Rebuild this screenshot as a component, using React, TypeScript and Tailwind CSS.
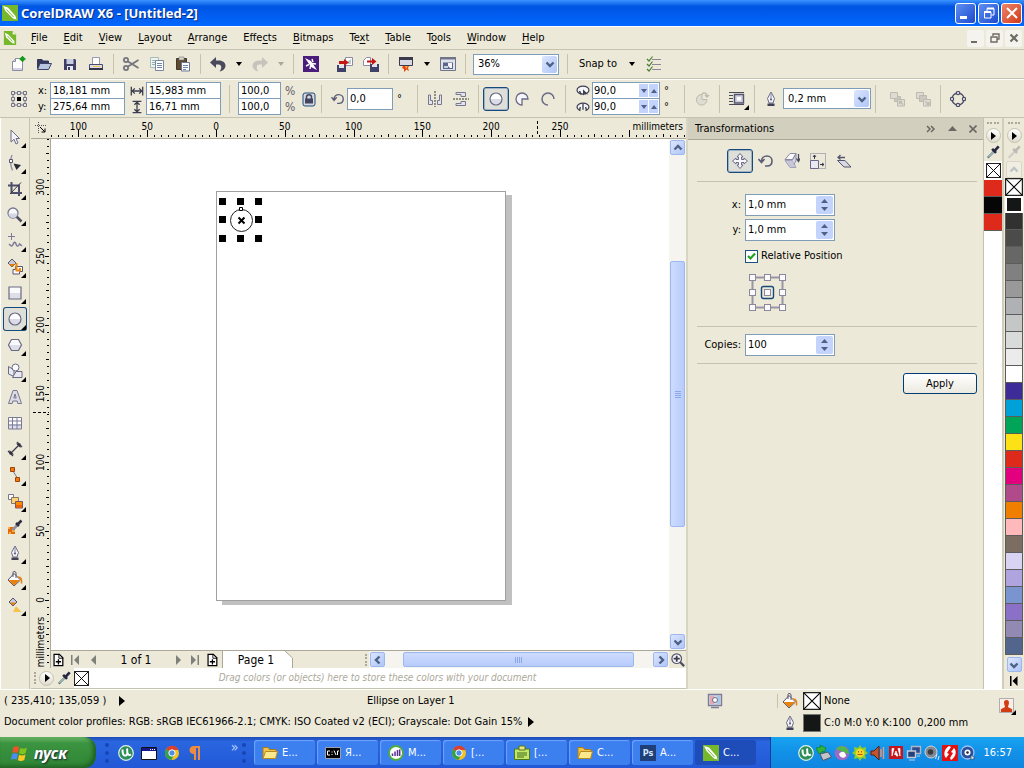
import { useState } from "react"
import type { ReactNode } from "react"
import clsx from "clsx"

const INK = "#4d4d6b"
const PALE = "#e4e4ee"
const GREY = "#bdbab2"

const icons: Record<string, ReactNode> = {
  newDoc: (
    <>
      <path d="M5.5 2.5H12.5V14.5H2.5V5.5Z" fill="#fff" stroke="#8c8ca8" />
      <path d="M5.5 2.5V5.5H2.5" fill="#d8d8e6" stroke="#8c8ca8" />
      <path d="M3 12h9v2H3z" fill="#d4d4e2" />
      <circle cx="12.5" cy="3" r="2.3" fill="#159a1e" />
      <path d="M12.5 0V6M9.5 3H15.500" stroke="#159a1e" strokeWidth="1.400" />
    </>
  ),
  open: (
    <>
      <path d="M1.500 12.500V3.500H6L7 5H12.500V7" fill="#33385c" stroke="#33385c" />
      <path d="M4 7.500H15.500L12.500 13.500H1.500Z" fill="#b9c6de" stroke="#3b4468" />
    </>
  ),
  save: (
    <>
      <path d="M2 3H13L14 4V14H2Z" fill="#3f3f66" />
      <path d="M4.500 3H11.500V8H4.500Z" fill="#c9cbe0" />
      <path d="M5 10H11V14H5Z" fill="#e9e9f3" />
      <path d="M6 11H8V14H6Z" fill="#3f3f66" />
    </>
  ),
  print: (
    <>
      <path d="M4.500 1.500H11.500V9H4.500Z" fill="#fff" stroke="#9a9ab0" />
      <path d="M1.500 8.500H14.500V13.500H1.500Z" fill="#dcdce8" stroke={INK} />
      <path d="M1 12H15V14H1Z" fill="#34344e" />
      <path d="M5 10H12V11H5Z" fill="#efc54d" />
    </>
  ),
  cut: (
    <g fill="none" stroke="#74747c" strokeWidth="1.800">
      <circle cx="3" cy="4" r="2.100" />
      <circle cx="3" cy="12" r="2.100" />
      <path d="M5 5.500L15.500 12M5 10.500L15.500 4" />
    </g>
  ),
  copy: (
    <>
      <path d="M1.500 1.500H9.500V11.500H1.500Z" fill="#eef3f0" stroke="#a9bcb8" />
      <path d="M3 4.500H8M3 6.500H8M3 8.500H8" stroke="#8fb3ae" />
      <path d="M6.500 4.500H14.500V14.500H6.500Z" fill="#fff" stroke="#7d86a0" />
      <path d="M8 7.500H13M8 9.500H13M8 11.500H13" stroke="#6f87a8" />
    </>
  ),
  paste: (
    <>
      <path d="M1.500 2.500H11.500V13.500H1.500Z" fill="#5e4a34" stroke="#453625" />
      <path d="M4 1H9V4H4Z" fill="#d8d8d0" stroke="#777" strokeWidth=".6" />
      <path d="M6.500 6.500H14.500V15H6.500Z" fill="#fff" stroke="#6d7694" />
      <path d="M8 9.500H13M8 11.500H13M8 13.500H11" stroke="#6f87a8" />
    </>
  ),
  undo: (
    <path d="M0 6.500L6 1V4.500H9C13 4.500 15.500 7 15.500 9.500C15.500 12.500 13 15 9.500 15.500C12 13 12 8.500 8.500 8.500H6V12Z" fill="#4a4a5e" />
  ),
  redo: (
    <path d="M16 6.500L10 1V4.500H7C3 4.500 .500 7 .500 9.500C.500 12.500 3 15 6.500 15.500C4 13 4 8.500 7.500 8.500H10V12Z" fill="#c6c4bc" />
  ),
  search: (
    <>
      <path d="M0 0H16V16H0Z" fill="#4a1d7c" />
      <path d="M2 2L8 5L10 8L14 14L8 11L6 8Z" fill="#fff" />
      <path d="M9 3L10 6M13 8L9 7.500M3 10L6 8.500M7 13L7.500 10" stroke="#fff" strokeWidth="1.400" />
    </>
  ),
  importFile: (
    <>
      <path d="M8.500 6V1.500H15.500V9.500H9" fill="#fff" stroke="#8c8ca8" />
      <path d="M11 5L14 3V8H11Z" fill="#b7cdd0" />
      <path d="M0 9H9V16H0Z" fill="#3f4268" />
      <path d="M2 9H7V12H2Z" fill="#e2e2ee" />
      <path d="M2 5H7V3L12 6.500L7 10V8H2Z" fill="#c51616" />
    </>
  ),
  exportFile: (
    <>
      <path d="M3.500 1.500H7.500V9.500H.500V4.500Z" fill="#fff" stroke="#8c8ca8" />
      <path d="M7 8H16V16H7Z" fill="#3f4268" />
      <path d="M9 8H14V11H9Z" fill="#e2e2ee" />
      <path d="M4 4.500H9V2L13.500 5.500L9 9V6.500H4Z" fill="#c51616" />
    </>
  ),
  launcher: (
    <>
      <path d="M1.500 1.500H14.500V9.500H1.500Z" fill="#d6d9e4" stroke="#3a3a4c" />
      <path d="M1 1H15V4H1Z" fill="#3a3a4c" />
      <path d="M5 10H11L10 12L11 15L8.500 13.500L6 16L6 13L4 12Z" fill="#e8420f" />
      <path d="M7 10H9.500L8.500 13Z" fill="#ffb93b" />
    </>
  ),
  welcome: (
    <>
      <path d="M.500 1.500H15.500V14.500H.500Z" fill="#dfe3ee" stroke="#707488" />
      <path d="M0 1H16V3.500H0Z" fill="#707488" />
      <path d="M3 6.500H13V13H3Z" fill="#5d6488" />
      <path d="M8 7H12V12H10L8 10Z" fill="#f4f6fb" />
      <path d="M4 10H8V12H4Z" fill="#c1d5e0" />
    </>
  ),
  options: (
    <>
      <path d="M6 3.500H15M6 8.500H15M6 13.500H15" stroke="#8a8a96" strokeWidth="1.200" />
      <path d="M1 3L3 5L6.500 .500M1 8L3 10L6.500 5.500M1 13L3 15L6.500 10.500" fill="none" stroke="#4b7d33" strokeWidth="1.200" />
    </>
  ),
  position: (
    <>
      <path d="M2 2H14V14H2Z" fill="none" stroke="#72728a" />
      {[0.5, 6.5, 12.5].map((y) =>
        [0.5, 6.5, 12.5].map((x) => <path key={`${x}-${y}`} d={`M${x} ${y}h3v3h-3z`} fill="#ece9d8" stroke="#72728a" />),
      )}
      <path d="M4 4H12V12H4Z" fill="#ece9d8" />
      <path d="M6 6H10V10H6Z" fill="#000" />
    </>
  ),
  widthArrow: (
    <path d="M1.500 3V13M14.500 3V13M2 8H14M5.500 5L2.500 8L5.500 11M10.500 5L13.500 8L10.500 11" fill="none" stroke="#3e3e50" strokeWidth="1.500" />
  ),
  heightArrow: (
    <path d="M3 1.500H13M3 14.500H13M8 2V14M5 5.500L8 2.500L11 5.500M5 10.500L8 13.500L11 10.500" fill="none" stroke="#3e3e50" strokeWidth="1.500" />
  ),
  lock: (
    <>
      <rect x="2" y="2" width="12" height="13" rx="2" fill="#d5d8e2" stroke="#1f4e79" />
      <path d="M5.500 8V6C5.500 3 10.500 3 10.500 6V8" fill="none" stroke="#44445e" strokeWidth="1.500" />
      <path d="M4 7.500H12V12.500H4Z" fill="#44445e" />
    </>
  ),
  rotate: (
    <path d="M3.500 8C3.500 5 6 3 9 3C12 3 14 5.300 14 8C14 11 12 13 9 13H7M.500 6L3.500 9.500L6.500 6" fill="none" stroke="#5c5c78" strokeWidth="1.600" />
  ),
  mirrorH: (
    <>
      <path d="M1.500 4V13.500H5.500V9.500H3.500V4ZM14.500 4V13.500H10.500V9.500H12.500V4Z" fill={PALE} stroke="#77778f" />
      <path d="M8 0V16" stroke="#333" strokeDasharray="2 1" />
    </>
  ),
  mirrorV: (
    <>
      <path d="M3 1.500H12.500V5.500H8V3.500H3ZM3 14.500H12.500V10.500H8V12.500H3Z" fill={PALE} stroke="#77778f" />
      <path d="M0 8H16" stroke="#333" strokeDasharray="2 1" />
    </>
  ),
  ellipse: (
    <>
      <circle cx="8" cy="8" r="6" fill="#fff" />
      <path d="M2 8H14A6 6 0 0 1 2 8Z" fill="#dcdce8" />
      <circle cx="8" cy="8" r="6" fill="none" stroke="#6a6a86" strokeWidth="1.200" />
    </>
  ),
  pie: <path d="M8 8H14A6 6 0 1 0 8 14Z" fill="#f5f5fa" stroke="#6a6a86" strokeWidth="1.300" />,
  arc: <path d="M14 8A6 6 0 1 0 8 14" fill="none" stroke="#6a6a86" strokeWidth="1.500" />,
  angleA: (
    <>
      <ellipse cx="8" cy="7" rx="6.800" ry="4.500" fill="#f5f5fa" stroke="#3e3e50" strokeWidth="1.400" />
      <path d="M8 6V13L10 11L14 12Z" fill="#3e3e50" />
      <path d="M4 8L6 12" stroke="#3e3e50" strokeWidth="1.800" />
    </>
  ),
  angleB: (
    <>
      <ellipse cx="8" cy="8" rx="6.800" ry="4.500" fill="#f5f5fa" stroke="#3e3e50" strokeWidth="1.400" />
      <path d="M5 10H11V14H5Z" fill="#ece9d8" />
      <path d="M8 4V11M5 8L4 12M11 8L12 12" stroke="#3e3e50" strokeWidth="1.500" />
    </>
  ),
  direction: (
    <g fill="#dedbd0" stroke={GREY}>
      <path d="M8 8.500H13A5.300 5.300 0 1 1 8 3.500Z" />
      <path d="M8 3C10 1 13 2 13 5M11 4L13 6L15 4" fill="none" strokeWidth="1.400" />
    </g>
  ),
  wrap: (
    <>
      <path d="M0 1.500H15M0 4.500H4M0 7.500H4M0 10.500H4M0 13.500H15" stroke="#4a4a58" />
      <path d="M5.500 3.500H14.500V12H5.500Z" fill="#d0d0e2" stroke="#55556e" strokeWidth="1.400" />
      <path d="M8 6H12V9.500H8Z" fill="#fff" />
    </>
  ),
  pen: (
    <>
      <path d="M8 1L11.500 7.500L10 12H6L4.500 7.500Z" fill="#f2f2f8" stroke="#6a6a86" />
      <path d="M8 2V8" stroke="#8a8aa2" />
      <circle cx="8" cy="8.500" r="1" fill="#55556e" />
      <path d="M4.500 12.500H11.500V15H4.500Z" fill="#3f3f55" />
    </>
  ),
  toFront: (
    <g fill="#dedbd0" stroke={GREY}>
      <path d="M5.500 5.500H11.500V10.500H5.500Z" fill="#cbc8bf" />
      <path d="M8.500 8.500H15.500V15H8.500Z" />
      <path d="M1.500 1.500H8.500V7.500H1.500Z" />
      <path d="M14 13.500L10.500 10.500M10.500 13V10.500H13" fill="none" strokeWidth="1.300" />
    </g>
  ),
  toBack: (
    <g fill="#dedbd0" stroke={GREY}>
      <path d="M1.500 1.500H8.500V7.500H1.500Z" />
      <path d="M4.500 4.500H11.500V10.500H4.500Z" fill="#cbc8bf" />
      <path d="M8.500 8.500H15.500V15H8.500Z" />
      <path d="M10.500 10.500L14 13.500M14 11V13.500H11.500" fill="none" strokeWidth="1.300" />
    </g>
  ),
  curves: (
    <g fill="#fff" stroke="#4d4d66" strokeWidth="1.300">
      <circle cx="8" cy="8" r="6" fill="none" />
      <circle cx="8" cy="2" r="1.600" />
      <circle cx="8" cy="14" r="1.600" />
      <circle cx="2" cy="8" r="1.600" />
      <circle cx="14" cy="8" r="1.600" />
    </g>
  ),
  pick: <path d="M4 1V13L7 10.300L9 15L11 14L9 9.500H12.500Z" fill="#f2f2f8" stroke="#6d6d88" />,
  shape: (
    <>
      <path d="M5 0C3 5 3 10 5.500 15.500" fill="none" stroke="#8a8aa2" strokeWidth="1.300" />
      <path d="M2.500 4.500H5.500V7.500H2.500Z" fill="#fff" stroke="#55556e" />
      <path d="M6.500 8.500L14 10L9.500 15Z" fill="#2b2b38" />
    </>
  ),
  crop: (
    <>
      <path d="M4.500 1V12H15M1 4.500H12V15" fill="none" stroke="#4e4e6c" strokeWidth="2" />
      <path d="M3 13L14 1.500" stroke="#3a3a48" />
    </>
  ),
  zoom: (
    <>
      <path d="M9 9L14.500 14.500" stroke="#4d4d5e" strokeWidth="2.500" />
      <circle cx="6" cy="6" r="5" fill="#f8f8fc" stroke="#77778f" strokeWidth="1.300" />
      <path d="M1.500 6.500H10.500A4.500 4.500 0 0 1 1.500 6.500Z" fill="#d3d7e4" />
    </>
  ),
  navigator: (
    <>
      <path d="M10 10L15 15" stroke="#4d4d5e" strokeWidth="2.500" />
      <circle cx="6.500" cy="6.500" r="5.500" fill="#f8f8fc" stroke="#55556e" strokeWidth="1.400" />
      <path d="M6.500 3V10M3 6.500H10" stroke="#3a3a4c" strokeWidth="2" />
    </>
  ),
  freehand: (
    <g fill="none" stroke="#7b7b97">
      <path d="M4.500 0V7M1 3.500H8" />
      <path d="M2 11C4 13 5 14 6 11.500S8 8 9 11S11 14 12.500 11L15 13" strokeWidth="1.500" />
    </g>
  ),
  smartFill: (
    <>
      <path d="M8.500 7.500H15.500V12.500H12.500V15H6V10.500H8.500Z" fill="#fff" stroke="#55556e" />
      <path d="M5 0L9 4L5 8L1 4Z" fill="#c9c9da" stroke="#55556e" />
      <path d="M2 5H8L5 8Z" fill="#e87d0a" />
      <path d="M9.500 4V11.500H13V9" fill="none" stroke="#f0860c" strokeWidth="2" />
    </>
  ),
  rectangle: (
    <>
      <path d="M2 2H14V14H2Z" fill="#fafafc" />
      <path d="M2 8H14V14H2Z" fill="#dedee9" />
      <path d="M2 2H14V14H2Z" fill="none" stroke="#6a6a86" strokeWidth="1.200" />
    </>
  ),
  polygon: (
    <>
      <path d="M4.500 2.500H11.500L14.500 8L11.500 13.500H4.500L1.500 8Z" fill="#fafafc" />
      <path d="M1.500 8H14.500L11.500 13.500H4.500Z" fill="#dedee9" />
      <path d="M4.500 2.500H11.500L14.500 8L11.500 13.500H4.500L1.500 8Z" fill="none" stroke="#6a6a86" strokeWidth="1.200" />
    </>
  ),
  basicShapes: (
    <g fill="#e9e9f2" stroke="#6a6a86">
      <path d="M1.500 3.500L7 7V13.500L1.500 11Z" />
      <path d="M9 8.500H15V14.500H5.500Z" />
      <circle cx="8.500" cy="4.500" r="3.500" fill="#fafafc" />
    </g>
  ),
  text: (
    <path d="M6 1.500H10L14.500 14.500H10.800L10.200 12H5.800L5.200 14.500H1.500ZM6.800 9H9.200L8 5Z" fill="#dcdce8" stroke="#77778f" fillRule="evenodd" />
  ),
  table: (
    <>
      <path d="M1.500 2.500H14.500V14H1.500Z" fill="#fff" />
      <path d="M2 9H14V14H2Z" fill="#dedee9" />
      <path d="M1.500 2.500H14.500V14H1.500ZM1.500 6H14.500M1.500 10H14.500M5.500 2.500V14M10 2.500V14" fill="none" stroke="#7b7b97" />
    </>
  ),
  dimension: (
    <>
      <path d="M3 13L13 3M1 10L6 15M10 1L15 6" stroke="#3a3a4c" strokeWidth="1.300" />
      <path d="M2.500 13.500V9L7 13.500ZM13.500 2.500V7L9 2.500Z" fill="#2f2f40" />
    </>
  ),
  connector: (
    <>
      <path d="M6 4L11 12" stroke="#77778f" />
      <path d="M3.500 .500H7.500V4.500H3.500ZM8.500 10.500H12.500V14.500H8.500Z" fill="#f27a08" stroke="#a0420a" />
    </>
  ),
  blend: (
    <>
      <path d="M1.500 1.500H6.500V6.500H1.500Z" fill="#fff" stroke="#77778f" />
      <path d="M4.500 4.500H11.500V10.500H4.500Z" fill="#fbd27a" stroke="#8a7560" />
      <path d="M8.500 8.500H15.500V15H8.500Z" fill="#ff8a00" stroke="#77566a" />
      <path d="M9 12H15V14.500H9Z" fill="#f25c05" />
    </>
  ),
  colorPick: (
    <>
      <path d="M1 8H8V15H1Z" fill="#e06a0a" />
      <path d="M1 8H3V10H1ZM5 11H8V13H5ZM2 13H4V15H2Z" fill="#fbb040" />
      <path d="M5.500 11L11 5.500" stroke="#8f8fa6" strokeWidth="2.500" />
      <path d="M9 4L12 7M10.500 5.500L14.500 1.500" stroke="#2d2d40" strokeWidth="2.500" />
    </>
  ),
  dropper: (
    <>
      <path d="M2 14.500L9 7.500" stroke="#5c7f82" strokeWidth="2.600" />
      <path d="M3 13.500L8.500 8" stroke="#e9f4f4" />
      <path d="M7 4.500L11.500 9M9.500 7L14.500 1.500" stroke="#262640" strokeWidth="3" />
    </>
  ),
  dropperOff: (
    <>
      <path d="M2 14.500L9 7.500" stroke="#cfcdc6" strokeWidth="2.600" />
      <path d="M7 4.500L11.500 9M9.500 7L14.500 1.500" stroke="#bcbab5" strokeWidth="3" />
    </>
  ),
  fill: (
    <>
      <path d="M7 2.500L13.500 9L7 15L1 9Z" fill="#fff" stroke="#55556e" />
      <path d="M1.500 9H13L7 14.500Z" fill="#e8820c" />
      <path d="M6 6V1.500C6 0 9 0 9 2V7" fill="none" stroke="#55556e" />
      <path d="M11 6C14 6 15 8 14.500 12.500" fill="none" stroke="#e8820c" strokeWidth="1.600" />
    </>
  ),
  interactiveFill: (
    <>
      <path d="M9 9L14.500 15H6Z" fill="#f5c24d" />
      <path d="M6 1L10 5L6 9L2 5Z" fill="#c9c9da" stroke="#55556e" />
      <path d="M3 5.500H9L6 8.500Z" fill="#e8820c" />
    </>
  ),
  move: (
    <path d="M8 .500L11 4H9.500V6.500H12V5L15.500 8L12 11V9.500H9.500V12H11L8 15.500L5 12H6.500V9.500H4V11L.500 8L4 5V6.500H6.500V4H5Z" fill="#f7f7fb" stroke="#6a6a86" />
  ),
  mirror: (
    <>
      <path d="M6 .500H12L8.500 6.500H1Z" fill="#fafafc" stroke="#8a8aa2" />
      <path d="M1 7.500H8.500L12 14.500H6Z" fill="#c7c7d9" stroke="#a3a3b8" />
      <path d="M8.500 7L12 .500V8L10 11" fill="#d8d8e6" stroke="#8a8aa2" />
      <path d="M14.500 1V8M12.500 5.500L14.500 8.500L16 5.500" fill="none" stroke="#4a4a5e" strokeWidth="1.300" />
    </>
  ),
  size: (
    <>
      <path d="M.500 .500H15.500V15.500H.500Z" fill="none" stroke="#77778f" strokeDasharray="1 1" />
      <path d="M.500 7.500H8.500V15.500H.500Z" fill="#e9e9f2" stroke="#6a6a86" />
      <path d="M4.500 6V2M3 4L4.500 2L6 4M10 11.500H14M12 10L14 11.500L12 13" fill="none" stroke="#3a3a4c" />
    </>
  ),
  skew: (
    <>
      <path d="M1.500 7.500H9L15 14H8Z" fill="#d9d9e6" stroke="#55556e" />
      <path d="M2 4.500H9M4.500 2L2 4.500L4.500 6.500" fill="none" stroke="#55556e" strokeWidth="1.300" />
    </>
  ),
  monitor: (
    <>
      <path d="M1.500 1.500H14.500V12.500H1.500Z" fill="#d5d8e4" stroke="#7d7d9a" strokeWidth="1.400" />
      <path d="M3 3H7V11H3Z" fill="#e4a9b2" />
      <path d="M10 3H13V11H10Z" fill="#a9c8e8" />
      <circle cx="8" cy="7" r="2.500" fill="#fff" stroke="#6a6a86" />
      <path d="M4 14.500H12" stroke="#7d7d9a" strokeWidth="1.500" />
    </>
  ),
  user: (
    <>
      <path d="M.500 .500H15.500V15.500H.500Z" fill="#fbeee9" stroke="#a6a6ae" />
      <path d="M8 2C10.500 2 11 4 10.500 6C10.200 8 9.500 8.500 9.500 9.500L14 12V15H2V12L6.500 9.500C6.500 8.500 5.800 8 5.500 6C5 4 5.500 2 8 2Z" fill="#d23c12" />
    </>
  ),
  corel: (
    <>
      <path d="M0 0H16V16H0Z" fill="#76b82a" />
      <path d="M1 1L6 2.500L13.500 11L14.500 14.500L11 13.500L3.500 6Z" fill="#fff" />
      <path d="M4.500 4.500L11.500 12" stroke="#76b82a" />
    </>
  ),
  corelDoc: (
    <>
      <path d="M1 0H11L15 4V16H1Z" fill="#76b82a" />
      <path d="M11 0V4H15Z" fill="#e6f3d4" />
      <path d="M2 2L6 4L13 11.500V14.500L10 13.500L3.500 7Z" fill="#fff" />
      <path d="M5 5.500L11 12" stroke="#76b82a" />
    </>
  ),
  addPage: (
    <>
      <path d="M3.500 1.500H9.500L13.500 5.500V14.500H3.500Z" fill="#fff" stroke="#000" strokeWidth="1.400" />
      <path d="M9 1V6H14" fill="none" stroke="#000" />
      <path d="M8.500 7V13M5.500 10H11.500" stroke="#000" strokeWidth="1.500" />
    </>
  ),
  flag: (
    <>
      <path d="M3 3C5 1.500 7 2 8 3L7 8C5.500 7 4 7 2 8Z" fill="#f0532a" />
      <path d="M9 3.500C11 4.500 13 4.500 15 3L14 8C12 9.500 10 9.500 8 8.500Z" fill="#7fc31c" />
      <path d="M1.800 9C3.500 8 5.500 8 7 9L6 14C4.500 13 2.500 13 .8 14Z" fill="#4c8df0" />
      <path d="M8 9.500C10 10.500 12 10.500 13.800 9L12.800 14C11 15.500 9 15.500 7 14.500Z" fill="#fcc91f" />
    </>
  ),
  utorrent: (
    <>
      <circle cx="8" cy="8" r="7.300" fill="#2f8f5b" stroke="#dff3e6" strokeWidth="1.200" />
      <path d="M4.500 4.500C4.500 9.500 5.500 11 8 10.500C10 10 9.500 7 9 3.500M9.500 8C10 10 11.500 10.500 13 9.500" fill="none" stroke="#fff" strokeWidth="2" />
    </>
  ),
  window: (
    <>
      <path d="M.500 2.500H15.500V14.500H.500Z" fill="#fff" stroke="#111" />
      <path d="M1 3H15V6H1Z" fill="#16168c" />
      <path d="M9 4.500H10M11 4.500H12M13 4.500H14" stroke="#fff" />
    </>
  ),
  chrome: (
    <>
      <circle cx="8" cy="8" r="7" fill="#f6c21c" />
      <path d="M8 8L2 4.300A7 7 0 0 1 14.500 5H8Z" fill="#d9402f" />
      <path d="M8 8L2 4.300A7 7 0 0 0 7.500 15L10 10Z" fill="#35a04a" />
      <circle cx="8" cy="8" r="3.200" fill="#4d8fe8" stroke="#fff" />
    </>
  ),
  pilcrow: (
    <>
      <path d="M13 1H7C1 1 1 9 7 9V15H9V3H11V15H13Z" fill="#f08a3c" />
      <path d="M3 10L6 15" stroke="#36628f" strokeWidth="2.400" />
    </>
  ),
  folder: (
    <>
      <path d="M1 2.500H6L7.500 4.500H14V13.500H1Z" fill="#f3c244" stroke="#a97c16" />
      <path d="M3.500 6.500H15.500L13.500 13.500H1Z" fill="#fde98d" stroke="#b58a20" />
    </>
  ),
  cmd: (
    <>
      <path d="M.500 2.500H15.500V13.500H.500Z" fill="#000" stroke="#bbb" strokeWidth=".8" />
      <path d="M5 6H2.500V10H5M7 6.500V7.500M7 9V10M9 5.500L11 10M12.500 10V6H14" fill="none" stroke="#fff" />
    </>
  ),
  meter: (
    <>
      <circle cx="8" cy="8" r="7" fill="#fff" stroke="#4fae3c" strokeWidth="1.800" />
      <path d="M4.500 11V8.500M7 11V6.500M9.500 11V5M11.700 11V4.500" stroke="#5b2d91" strokeWidth="1.500" />
    </>
  ),
  notes: (
    <>
      <path d="M.500 4H15.500V14.500H.500Z" fill="#c3e66b" stroke="#4a7a1c" />
      <path d="M5 1H11V5H5Z" fill="#f3e27c" stroke="#4a7a1c" />
      <path d="M3 8H13M3 10H13M3 12H10" stroke="#3f6c16" />
    </>
  ),
  safelyRemove: (
    <>
      <path d="M4 9L12 7L15.500 12L7 15.500Z" fill="#c1c4ca" stroke="#53565e" />
      <path d="M0 3L5 2L4 0L10 3L8 8L7 6L3 9Z" fill="#2fb53a" stroke="#12701b" strokeWidth=".6" />
    </>
  ),
  violetGreen: (
    <>
      <circle cx="8" cy="8" r="7.300" fill="#9a6cc4" />
      <path d="M2 4C6 -1 14 1 15.300 9L9 7Z" fill="#52b848" />
      <path d="M5 9C8 5 12 7 12 11C10 14 6 13 5 9Z" fill="#fff" />
    </>
  ),
  flower: (
    <>
      <path d="M8 0L10 3L14 2L13.500 6L16 8L13 10L14 14L10 13L8 16L6 13L2 14L3 10L0 8L2.500 6L2 2L6 3Z" fill="#8ccf2a" />
      <circle cx="8" cy="8" r="4.300" fill="#f8d52b" />
      <path d="M6.500 6V7.500M9.500 6V7.500M5.500 9.500H10.500" stroke="#b05a00" />
    </>
  ),
  sound: (
    <>
      <path d="M1 6H4L9 1V15L4 10H1Z" fill="#c65330" stroke="#5c1f0c" />
      <path d="M11 4V12M13.500 2V14" stroke="#e59a80" strokeWidth="1.400" />
    </>
  ),
  adobe: (
    <>
      <path d="M1 1H15V14H1Z" fill="#c4161c" />
      <path d="M4 11V3.500H6L4 11ZM12 11V3.500H10L12 11ZM8 6L10 11H8.500L8 9.500H6.500Z" fill="#fff" stroke="#fff" strokeWidth=".7" />
    </>
  ),
  network: (
    <>
      <path d="M5.500 1.500H14.500V8.500H5.500Z" fill="#2f4c8a" stroke="#aeb6c8" strokeWidth="1.400" />
      <path d="M1.500 6H9.500V12.500H1.500Z" fill="#28407a" stroke="#c3cadb" strokeWidth="1.400" />
      <path d="M3 15H9M11 11H14" stroke="#c3cadb" />
    </>
  ),
  speaker: (
    <>
      <circle cx="7" cy="7" r="6" fill="#85888f" stroke="#cfd3da" />
      <circle cx="6.500" cy="7" r="2.800" fill="#3a3c42" />
      <path d="M13 9L11.500 14M15 11L14 15" stroke="#d7ecff" />
    </>
  ),
  flash: (
    <>
      <path d="M0 0H16V16H0Z" fill="#e01212" />
      <path d="M7 1C2 4 1 10 4 13L7 9L5 8L9 2ZM9 15C14 12 15 6 12 3L9 7L11 8L8 13Z" fill="#fff" />
    </>
  ),
  disc: (
    <>
      <circle cx="7.500" cy="7.500" r="6.500" fill="#2c4f9c" stroke="#9cc1f2" strokeWidth="1.300" />
      <circle cx="7.500" cy="7.500" r="3" fill="#fff" />
      <circle cx="7.500" cy="7.500" r="1.300" fill="#223" />
      <path d="M11 10L15 13L11 15Z" fill="#cfe2ff" stroke="#234" strokeWidth=".6" />
    </>
  ),
}

function Icon({ name, className = "size-4" }: { name: string; className?: string }) {
  return (
    <svg viewBox="0 0 16 16" className={clsx("shrink-0", className)} aria-hidden="true">
      {icons[name]}
    </svg>
  )
}

function Triangle({ className = "h-1 w-1.5" }: { className?: string }) {
  return (
    <svg viewBox="0 0 6 4" className={className} preserveAspectRatio="none" aria-hidden="true">
      <path d="M0 0H6L3 4Z" fill="currentColor" />
    </svg>
  )
}

function Chevron({ dir, className = "" }: { dir: "up" | "down" | "left" | "right"; className?: string }) {
  const d = {
    up: "M1.500 6.500L5 3L8.500 6.500",
    down: "M1.500 3.500L5 7L8.500 3.500",
    left: "M6.500 1.500L3 5L6.500 8.500",
    right: "M3.500 1.500L7 5L3.500 8.500",
  }[dir]
  return (
    <svg viewBox="0 0 10 10" className={clsx("size-2.5", className)} aria-hidden="true">
      <path d={d} fill="none" stroke="#4d6185" strokeWidth="2.400" />
    </svg>
  )
}

function Separator({ tall = false }: { tall?: boolean }) {
  return <div className={clsx("mx-1 w-px shrink-0 bg-[#c5c2ad]", tall ? "h-7" : "h-5")} />
}

function ToolButton({ icon, label, active = false }: { icon: string; label: string; active?: boolean }) {
  return (
    <button
      aria-label={label}
      className={clsx(
        "flex h-6 w-[26px] shrink-0 items-center justify-center rounded-[3px]",
        active && "border border-[#174a7c] bg-[#dfdfda] inset-ring inset-ring-[#9fb3c4]",
      )}
    >
      <Icon name={icon} />
    </button>
  )
}

function DropArrow({ label, muted = false }: { label: string; muted?: boolean }) {
  return (
    <button aria-label={label} className={clsx("flex h-6 w-4 shrink-0 items-center justify-center", muted ? "text-[#aca899]" : "text-black")}>
      <Triangle />
    </button>
  )
}

function ComboBox({ label, value, className }: { label: string; value: string; className: string }) {
  return (
    <div className={clsx("relative h-[21px] shrink-0", className)}>
      <select aria-label={label} defaultValue={value} className="h-full w-full appearance-none border border-[#7f9db9] bg-white pl-1">
        <option>{value}</option>
      </select>
      <span className="pointer-events-none absolute inset-y-0.5 right-0.5 flex w-[15px] items-center justify-center rounded-xs bg-linear-to-br from-[#dbe5fe] to-[#b0c6f8]">
        <Chevron dir="down" />
      </span>
    </div>
  )
}

function PairInput({ labels, values, className }: { labels: string[]; values: string[]; className: string }) {
  return (
    <div className={clsx("flex shrink-0 flex-col", className)}>
      {values.map((value, i) => (
        <input
          key={labels[i]}
          aria-label={labels[i]}
          defaultValue={value}
          className={clsx("h-[17px] w-full border border-[#7f9db9] bg-white pl-0.5", i > 0 && "-mt-px")}
        />
      ))}
    </div>
  )
}

const MENUS = [
  ["", "F", "ile"],
  ["", "E", "dit"],
  ["", "V", "iew"],
  ["", "L", "ayout"],
  ["", "A", "rrange"],
  ["Effe", "c", "ts"],
  ["", "B", "itmaps"],
  ["Te", "x", "t"],
  ["", "T", "able"],
  ["T", "o", "ols"],
  ["", "W", "indow"],
  ["", "H", "elp"],
]

function TitleBar() {
  return (
    <header className="flex h-[26px] shrink-0 items-center bg-linear-to-b from-[#3a93ff] via-[#0054e3] via-25% to-[#0068ff] pr-0.5 pl-0.5">
      <Icon name="corel" />
      <h1 className="ml-[3px] flex-1 font-['Noto_Sans'] text-[13px] font-bold text-white [text-shadow:1px_1px_#0a2a80]">
        CorelDRAW X6 - [Untitled-2]
      </h1>
      <div className="flex gap-0.5">
        <button aria-label="Minimize" className="flex size-[21px] items-end rounded-[3px] border border-white bg-linear-to-br from-[#5f8ff2] to-[#1c48cc] p-1">
          <span className="h-[3px] w-[7px] bg-white" />
        </button>
        <button aria-label="Restore" className="flex size-[21px] items-center justify-center rounded-[3px] border border-white bg-linear-to-br from-[#5f8ff2] to-[#1c48cc]">
          <svg viewBox="0 0 12 12" className="size-3" aria-hidden="true">
            <path d="M4 4V1.500H11V8H8.500M1.500 5H8V11H1.500Z" fill="none" stroke="#fff" />
            <path d="M4 1.500H11M1 5H8" stroke="#fff" strokeWidth="2" />
          </svg>
        </button>
        <button aria-label="Close" className="flex size-[21px] items-center justify-center rounded-[3px] border border-white bg-linear-to-br from-[#ee8468] to-[#cf3612]">
          <svg viewBox="0 0 12 12" className="size-3" aria-hidden="true">
            <path d="M1 1L11 11M11 1L1 11" stroke="#fff" strokeWidth="2" />
          </svg>
        </button>
      </div>
    </header>
  )
}

function MenuBar() {
  return (
    <nav className="flex h-6 shrink-0 items-center border-t border-b border-t-white border-b-[#c5c2ad] pr-0.5 pl-[3px]">
      <Icon name="corelDoc" className="size-3.5" />
      <div className="ml-3.5 flex flex-1 gap-4">
        {MENUS.map(([before, key, after]) => (
          <button key={before + key + after}>
            {before}
            <span className="underline underline-offset-2">{key}</span>
            {after}
          </button>
        ))}
      </div>
      <div className="flex gap-0.5">
        <button aria-label="Minimize document" className="flex size-[17px] items-end rounded-xs bg-[#f4f3ee] p-1">
          <span className="h-0.5 w-1.5 bg-[#6f6c62]" />
        </button>
        <button aria-label="Restore document" className="flex size-[17px] items-center justify-center rounded-xs bg-[#f4f3ee]">
          <svg viewBox="0 0 10 10" className="size-2.5" aria-hidden="true">
            <path d="M3 3V1H9V6H7M1 4H7V9H1Z" fill="none" stroke="#6f6c62" strokeWidth="1.400" />
          </svg>
        </button>
        <button aria-label="Close document" className="flex size-[17px] items-center justify-center rounded-xs bg-[#f4f3ee]">
          <svg viewBox="0 0 10 10" className="size-2.5" aria-hidden="true">
            <path d="M1.500 1.500L8.500 8.500M8.500 1.500L1.500 8.500" stroke="#6f6c62" strokeWidth="2.200" />
          </svg>
        </button>
      </div>
    </nav>
  )
}

function StandardToolbar() {
  return (
    <div className="flex h-[29px] shrink-0 items-center border-b border-[#c5c2ad] pl-[5px]">
      <ToolButton icon="newDoc" label="New" />
      <ToolButton icon="open" label="Open" />
      <ToolButton icon="save" label="Save" />
      <ToolButton icon="print" label="Print" />
      <Separator />
      <ToolButton icon="cut" label="Cut" />
      <ToolButton icon="copy" label="Copy" />
      <ToolButton icon="paste" label="Paste" />
      <Separator />
      <ToolButton icon="undo" label="Undo" />
      <DropArrow label="Undo list" />
      <ToolButton icon="redo" label="Redo" />
      <DropArrow label="Redo list" muted />
      <Separator />
      <ToolButton icon="search" label="Search content" />
      <div className="w-2" />
      <ToolButton icon="importFile" label="Import" />
      <ToolButton icon="exportFile" label="Export" />
      <Separator />
      <ToolButton icon="launcher" label="Application launcher" />
      <DropArrow label="Launcher list" />
      <ToolButton icon="welcome" label="Welcome screen" />
      <Separator />
      <ComboBox label="Zoom levels" value="36%" className="ml-[3px] w-[86px]" />
      <div className="w-1" />
      <Separator />
      <button className="flex items-center gap-3 pl-[7px]">
        Snap to
        <Triangle />
      </button>
      <div className="w-1.5" />
      <ToolButton icon="options" label="Options" />
    </div>
  )
}

function PropertyBar() {
  return (
    <div className="flex h-[39px] shrink-0 items-center border-t border-b border-t-white border-b-[#c5c2ad] pl-1.5">
      <ToolButton icon="position" label="Object origin" />
      <div className="ml-1.5 flex w-3 flex-col leading-4">
        <span>x:</span>
        <span>y:</span>
      </div>
      <PairInput labels={["X position", "Y position"]} values={["18,181 mm", "275,64 mm"]} className="w-[75px]" />
      <div className="ml-[5px] flex w-4 flex-col gap-0.5">
        <Icon name="widthArrow" className="size-3.5" />
        <Icon name="heightArrow" className="size-3.5" />
      </div>
      <PairInput labels={["Object width", "Object height"]} values={["15,983 mm", "16,71 mm"]} className="w-[75px]" />
      <div className="w-1" />
      <Separator tall />
      <div className="w-1" />
      <PairInput labels={["Scale X", "Scale Y"]} values={["100,0", "100,0"]} className="w-[43px]" />
      <div className="ml-1 flex w-4 flex-col text-xs leading-4 text-[#5f5c68]">
        <span>%</span>
        <span>%</span>
      </div>
      <button aria-label="Lock ratio">
        <Icon name="lock" />
      </button>
      <Separator tall />
      <Icon name="rotate" className="mr-0.5 ml-[5px] size-3.5" />
      <input aria-label="Angle of rotation" defaultValue="0,0" className="h-[22px] w-[46px] border border-[#7f9db9] bg-white pl-0.5" />
      <span className="w-5 pl-1">°</span>
      <Separator tall />
      <ToolButton icon="mirrorH" label="Mirror horizontally" />
      <ToolButton icon="mirrorV" label="Mirror vertically" />
      <Separator tall />
      <ToolButton icon="ellipse" label="Ellipse" active />
      <ToolButton icon="pie" label="Pie" />
      <ToolButton icon="arc" label="Arc" />
      <Separator tall />
      <div className="ml-1.5 flex w-4 flex-col gap-0.5">
        <Icon name="angleA" className="size-3.5" />
        <Icon name="angleB" className="size-3.5" />
      </div>
      <div className="flex w-[68px] flex-col">
        {["Starting angle", "Ending angle"].map((label, i) => (
          <div key={label} className={clsx("flex h-[17px] border border-[#7f9db9] bg-white p-px", i > 0 && "-mt-px")}>
            <input aria-label={label} defaultValue="90,0" className="min-w-0 flex-1 bg-transparent" />
            <button aria-label={`${label} down`} className="flex w-[9px] items-center justify-center bg-[#c3d3fb] text-[#4d6185]">
              <Triangle />
            </button>
            <button aria-label={`${label} up`} className="ml-px flex w-[9px] items-center justify-center bg-[#c3d3fb] text-[#4d6185]">
              <Triangle className="h-1 w-1.5 rotate-180" />
            </button>
          </div>
        ))}
      </div>
      <div className="flex w-5 flex-col pl-1 leading-4">
        <span>°</span>
        <span>°</span>
      </div>
      <Separator tall />
      <ToolButton icon="direction" label="Change directions" />
      <Separator tall />
      <div className="relative">
        <ToolButton icon="wrap" label="Wrap text" />
        <Corner />
      </div>
      <Separator tall />
      <Icon name="pen" className="mx-1 size-4" />
      <ComboBox label="Outline width" value="0,2 mm" className="w-[88px]" />
      <Separator tall />
      <div className="w-1" />
      <ToolButton icon="toFront" label="To front of layer" />
      <ToolButton icon="toBack" label="To back of layer" />
      <Separator tall />
      <ToolButton icon="curves" label="Convert to curves" />
    </div>
  )
}

// Small black wedge that marks a flyout
function Corner() {
  return (
    <svg viewBox="0 0 5 5" className="pointer-events-none absolute right-px bottom-px size-[5px]" aria-hidden="true">
      <path d="M5 0V5H0Z" fill="#000" />
    </svg>
  )
}

const TOOLS: [string, string, boolean][] = [
  ["pick", "Pick", true],
  ["shape", "Shape", true],
  ["crop", "Crop", true],
  ["zoom", "Zoom", true],
  ["freehand", "Freehand", true],
  ["smartFill", "Smart fill", true],
  ["rectangle", "Rectangle", true],
  ["ellipse", "Ellipse", true],
  ["polygon", "Polygon", true],
  ["basicShapes", "Basic shapes", true],
  ["text", "Text", false],
  ["table", "Table", false],
  ["dimension", "Dimension", true],
  ["connector", "Connector", true],
  ["blend", "Blend", true],
  ["colorPick", "Color eyedropper", true],
  ["pen", "Outline pen", true],
  ["fill", "Fill", true],
  ["interactiveFill", "Interactive fill", true],
]

function Toolbox() {
  const [tool, setTool] = useState("ellipse")

  return (
    <aside className="flex w-[30px] shrink-0 flex-col items-center gap-0.5 border-r border-l border-r-[#c5c2ad] border-l-white pt-[7px]">
      {TOOLS.map(([icon, label, flyout]) => (
        <button
          key={icon}
          aria-label={label}
          onClick={() => setTool(icon)}
          className={clsx(
            "relative flex size-6 shrink-0 items-center justify-center rounded-[3px]",
            tool === icon && "bg-[#dfdfda] inset-ring inset-ring-[#174a7c]",
          )}
        >
          <Icon name={icon} />
          {flyout && <Corner />}
        </button>
      ))}
    </aside>
  )
}

const MM = 1.376
const marks = (from: number, to: number) => Array.from({ length: (to - from) / 5 + 1 }, (_, i) => from + i * 5)

function HorizontalRuler() {
  const zero = 165
  return (
    <svg className="h-full w-full text-[10px]" aria-hidden="true">
      {marks(-120, 340).map((mm) => {
        const x = Math.round(zero + mm * MM)
        const h = mm % 50 === 0 ? 7 : mm % 25 === 0 ? 3 : 2
        return <rect key={mm} x={x} y={19 - h} width="1" height={h} />
      })}
      {[-100, -50, 0, 50, 100, 150, 200, 250].map((mm) => (
        <text key={mm} x={zero + mm * MM} y="12" textAnchor="middle">
          {Math.abs(mm)}
        </text>
      ))}
      <path d="M486.500 3V18" stroke="#000" strokeDasharray="3 2" />
      <text x="632" y="12" textAnchor="end">
        millimeters
      </text>
    </svg>
  )
}

function VerticalRuler() {
  const zero = 461
  return (
    <svg className="h-full w-full text-[10px]" aria-hidden="true">
      {marks(-45, 335).map((mm) => {
        const y = Math.round(zero - mm * MM)
        const w = mm % 50 === 0 ? 4 : mm % 25 === 0 ? 3 : 2
        return <rect key={mm} x={18 - w} y={y} width={w} height="1" />
      })}
      {[0, 50, 100, 150, 200, 250, 300].map((mm) => (
        <text key={mm} transform={`translate(13 ${zero - mm * MM}) rotate(-90)`} textAnchor="middle">
          {mm}
        </text>
      ))}
      <path d="M2 273.500H18" stroke="#000" strokeDasharray="3 2" />
      <text transform="translate(13 503) rotate(-90)" textAnchor="middle">
        millimeters
      </text>
    </svg>
  )
}

function Canvas() {
  return (
    <div className="relative min-w-0 flex-1 overflow-hidden bg-white">
      <div className="absolute top-[52px] left-[165px] h-[410px] w-[290px] border border-[#a0a0a0] bg-white shadow-[6px_4px_0_#c0c0c0]">
        <svg className="size-[52px]" viewBox="0 0 52 52" aria-hidden="true">
          {[6, 24, 43].map((y) =>
            [2, 20, 38].map((x) => (x === 20 && y === 24 ? null : <rect key={`${x}-${y}`} x={x} y={y} width="7" height="7" />)),
          )}
          <circle cx="24.500" cy="28.500" r="11" fill="none" stroke="#222" />
          <path d="M22.500 15.500H25.500V18.500H22.500Z" fill="#fff" stroke="#000" />
          <path d="M21.500 25.500L27.500 31.500M27.500 25.500L21.500 31.500" stroke="#000" strokeWidth="2" />
        </svg>
      </div>
    </div>
  )
}

function ScrollButton({ dir }: { dir: "up" | "down" | "left" | "right" }) {
  return (
    <button
      aria-label={`Scroll ${dir}`}
      className="flex size-[15px] shrink-0 items-center justify-center rounded-xs border border-[#9db8ee] bg-linear-to-br from-[#dbe5fe] to-[#b0c6f8]"
    >
      <Chevron dir={dir} />
    </button>
  )
}

function PageBar() {
  return (
    <div className="flex h-[18px] shrink-0 items-center border-t border-[#aca899]">
      <button aria-label="Add page before">
        <Icon name="addPage" className="size-3.5" />
      </button>
      <button aria-label="First page" className="ml-[5px]">
        <svg viewBox="0 0 10 10" className="size-2.5" aria-hidden="true">
          <path d="M1 0H2.500V10H1ZM9 0V10L4 5Z" fill="#80807a" />
        </svg>
      </button>
      <button aria-label="Previous page" className="ml-[9px]">
        <svg viewBox="0 0 10 10" className="size-2.5" aria-hidden="true">
          <path d="M7 0V10L2 5Z" fill="#80807a" />
        </svg>
      </button>
      <span className="w-[74px] text-center text-xs">1 of 1</span>
      <button aria-label="Next page">
        <svg viewBox="0 0 10 10" className="size-2.5" aria-hidden="true">
          <path d="M3 0V10L8 5Z" fill="#80807a" />
        </svg>
      </button>
      <button aria-label="Last page" className="ml-[7px]">
        <svg viewBox="0 0 10 10" className="size-2.5" aria-hidden="true">
          <path d="M9 0H7.500V10H9ZM1 0V10L6 5Z" fill="#80807a" />
        </svg>
      </button>
      <button aria-label="Add page after" className="ml-[5px]">
        <Icon name="addPage" className="size-3.5" />
      </button>
      <button className="relative ml-[3px] h-full w-[71px] border-l border-[#aca899] pr-1 text-xs">
        <svg viewBox="0 0 70 17" preserveAspectRatio="none" className="absolute inset-0 h-full w-full" aria-hidden="true">
          <path d="M0 0H62L69.500 7V17H0Z" fill="#fff" />
          <path d="M62 0L69.500 7V17" fill="none" stroke="#aca899" />
        </svg>
        <span className="relative">Page 1</span>
      </button>
      <div className="flex-1" />
      <div className="mr-0.5 h-3 border-l-2 border-dotted border-[#aca899]" />
      <div className="flex h-full w-[300px] items-center bg-[#f5f4ef] px-px">
        <ScrollButton dir="left" />
        <div className="ml-[18px] flex h-[15px] w-[231px] items-center justify-center gap-px rounded-xs border border-[#9db8ee] bg-linear-to-b from-[#cddbff] to-[#b8cbfa]">
          {[0, 1, 2, 3].map((i) => (
            <span key={i} className="h-1.5 w-px bg-[#8ba8e8]" />
          ))}
        </div>
        <div className="flex-1" />
        <ScrollButton dir="right" />
      </div>
      <button aria-label="Navigator" className="flex w-[17px] justify-center">
        <Icon name="navigator" className="size-3.5" />
      </button>
    </div>
  )
}

function DocumentPalette() {
  return (
    <div className="flex h-[21px] shrink-0 items-center border-b border-[#c5c2ad] bg-white">
      <div className="flex h-full items-center gap-[3px] bg-[#ece9d8] px-[3px]">
        <span className="h-3 border-l-2 border-dotted border-[#aca899]" />
        <RoundButton label="Palette options" />
        <Icon name="dropper" className="size-3.5" />
      </div>
      <NoColor className="size-[15px]" />
      <p className="flex-1 pr-5 text-center text-[10px] text-[#aca899] italic">
        Drag colors (or objects) here to store these colors with your document
      </p>
    </div>
  )
}

function RoundButton({ label }: { label: string }) {
  return (
    <button aria-label={label} className="flex size-[15px] items-center justify-center rounded-full border border-[#c5c2ad] bg-linear-to-b from-white to-[#dedbd0]">
      <svg viewBox="0 0 6 8" className="h-2 w-1.5" aria-hidden="true">
        <path d="M1 0L6 4L1 8Z" />
      </svg>
    </button>
  )
}

function NoColor({ className }: { className: string }) {
  return (
    <svg viewBox="0 0 16 16" preserveAspectRatio="none" className={clsx("shrink-0", className)} aria-hidden="true">
      <path d="M.500 .500H15.500V15.500H.500Z" fill="#fff" stroke="#222" strokeWidth="1.200" />
      <path d="M1 1L15 15M15 1L1 15" stroke="#000" />
    </svg>
  )
}

function Workspace() {
  return (
    <main className="flex min-w-0 flex-1 flex-col border-r-2 border-[#d8d5c2] pl-px">
      <div className="flex h-[21px] shrink-0 border-b border-[#aca899]">
        <div className="flex w-5 items-center justify-center">
          <svg viewBox="0 0 12 12" className="size-3" aria-hidden="true">
            <path d="M0 3.500H12M3.500 0V12" stroke="#555" strokeDasharray="1 1" />
            <path d="M5 5L10 10M10 6.500V10H6.500" fill="none" stroke="#000" />
          </svg>
        </div>
        <div className="min-w-0 flex-1">
          <HorizontalRuler />
        </div>
      </div>
      <div className="flex min-h-0 flex-1">
        <div className="w-5 shrink-0 overflow-hidden border-r border-[#aca899]">
          <VerticalRuler />
        </div>
        <div className="flex min-w-0 flex-1 flex-col">
          <div className="flex min-h-0 flex-1">
            <Canvas />
            <div className="flex w-[17px] shrink-0 flex-col items-center bg-[#f5f4ef] py-px">
              <ScrollButton dir="up" />
              <div className="grow-[108]" />
              <div className="flex w-[15px] grow-[262] flex-col items-center justify-center gap-px rounded-xs border border-[#9db8ee] bg-linear-to-r from-[#cddbff] to-[#b8cbfa]">
                {[0, 1, 2, 3].map((i) => (
                  <span key={i} className="h-px w-1.5 bg-[#8ba8e8]" />
                ))}
              </div>
              <div className="grow-[109]" />
              <ScrollButton dir="down" />
            </div>
          </div>
          <PageBar />
        </div>
      </div>
      <DocumentPalette />
    </main>
  )
}

function SpinField({ id, label, value }: { id: string; label: string; value: string }) {
  return (
    <div className="flex items-center">
      <label htmlFor={id} className="w-12 pr-1 text-right">
        {label}
      </label>
      <div className="flex h-[22px] w-[90px] border border-[#7f9db9] bg-white p-px">
        <input id={id} defaultValue={value} className="min-w-0 flex-1 bg-transparent pl-px" />
        <div className="flex w-[17px] flex-col justify-center gap-1 rounded-xs bg-[#c3d3fb] text-[#4d6185]">
          <button aria-label={`Increase ${label}`} className="flex justify-center">
            <Triangle className="h-1 w-[7px] rotate-180" />
          </button>
          <button aria-label={`Decrease ${label}`} className="flex justify-center">
            <Triangle className="h-1 w-[7px]" />
          </button>
        </div>
      </div>
    </div>
  )
}

function TransformDocker() {
  const [relative, setRelative] = useState(true)

  return (
    <section className="flex w-[296px] shrink-0 flex-col border-r border-[#c5c2ad]">
      <div className="flex h-[22px] items-center gap-3 border-b border-[#aca899] bg-[#d2cfbe] pr-1.5 pl-[7px] text-[#6b6860]">
        <h2 className="flex-1 text-black">Transformations</h2>
        <button aria-label="Collapse docker">
          <svg viewBox="0 0 10 8" className="h-2 w-2.5" aria-hidden="true">
            <path d="M1 1L4 4L1 7M5 1L8 4L5 7" fill="none" stroke="currentColor" strokeWidth="1.500" />
          </svg>
        </button>
        <button aria-label="Roll up">
          <Triangle className="h-[5px] w-[9px] rotate-180" />
        </button>
        <button aria-label="Close docker">
          <svg viewBox="0 0 8 8" className="size-2" aria-hidden="true">
            <path d="M.500 .500L7.500 7.500M7.500 .500L.500 7.500" stroke="currentColor" strokeWidth="1.600" />
          </svg>
        </button>
      </div>
      <div className="flex flex-col pr-1.5 pl-[9px]">
        <div className="flex h-[42px] items-center border-b border-[#c5c2ad] pl-[30px]">
          <ToolButton icon="move" label="Position" active />
          <ToolButton icon="rotate" label="Rotation" />
          <ToolButton icon="mirror" label="Scale and mirror" />
          <ToolButton icon="size" label="Size" />
          <ToolButton icon="skew" label="Skew" />
        </div>
        <div className="flex flex-col gap-[3px] pt-3">
          <SpinField id="pos-x" label="x:" value="1,0 mm" />
          <SpinField id="pos-y" label="y:" value="1,0 mm" />
        </div>
        <label className="mt-[7px] ml-12 flex items-center gap-[3px]">
          <span className="relative flex size-[13px]">
            <input
              type="checkbox"
              checked={relative}
              onChange={(e) => setRelative(e.target.checked)}
              className="size-[13px] appearance-none border border-[#1c5180] bg-white"
            />
            {relative && (
              <svg viewBox="0 0 13 13" className="pointer-events-none absolute inset-0" aria-hidden="true">
                <path d="M3 6L5.500 8.500L10 3.500" fill="none" stroke="#21a121" strokeWidth="2.200" />
              </svg>
            )}
          </span>
          Relative Position
        </label>
        <div className="mt-[9px] flex h-[54px] border-b border-[#c5c2ad] pl-[51px]">
          <svg viewBox="0 0 38 38" className="size-[38px]" aria-hidden="true">
            <path d="M4.500 4.500H34.500V34.500H4.500Z" fill="none" stroke="#9a95a5" strokeWidth="2" />
            {[1.5, 16.5, 31.5].map((y) =>
              [1.5, 16.5, 31.5].map((x) => <rect key={`${x}-${y}`} x={x} y={y} width="6" height="6" fill="#fafafc" stroke="#8d879c" />),
            )}
            <rect x="13.500" y="13.500" width="12" height="12" rx="2" fill="none" stroke="#174a7c" strokeWidth="1.400" />
          </svg>
        </div>
        <div className="border-b border-[#c5c2ad] py-[7px]">
          <SpinField id="copies" label="Copies:" value="100" />
        </div>
        <button className="mt-[9px] h-[21px] w-[74px] self-end rounded-[3px] border border-[#003c74] bg-linear-to-b from-white to-[#eceae0]">Apply</button>
      </div>
    </section>
  )
}

const DEFAULT_COLORS = [
  "#151716", "#31312f", "#4b4b4a", "#676765", "#808080", "#999999", "#b0b1b4", "#c5c7c6", "#d9dbda", "#ebebeb", "#ffffff",
  "#3d2b98", "#00a0d8", "#00a558", "#fbe116", "#dd2a1b", "#e3007f", "#b04a8a", "#f07f00", "#ffb9bb", "#7c6d62",
  "#d8d3f2", "#b0a4e0", "#7a94d0", "#8a70c6", "#938ab4", "#51658d",
]

function PaletteHeader({ dropper }: { dropper: string }) {
  return (
    <>
      <div className="mt-1 w-3 border-t-2 border-dotted border-[#aca899]" />
      <div className="mt-1">
        <RoundButton label="Palette menu" />
      </div>
      <Icon name={dropper} className="mt-0.5 size-3.5" />
    </>
  )
}

function Palettes() {
  return (
    <>
      <aside className="flex w-5 shrink-0 flex-col items-center border-r-2 border-[#d0cdb9] bg-white">
        <div className="flex h-[43px] w-full shrink-0 flex-col items-center bg-[#ece9d8]">
          <PaletteHeader dropper="dropper" />
        </div>
        <NoColor className="mt-0.5 mb-0.5 size-[15px]" />
        {["#dd2a1b", "#060606", "#dd2a1b"].map((color, i) => (
          <button key={i} aria-label={`Document color ${color}`} className="h-[17px] w-full border-b border-[#5c5c5c]" style={{ backgroundColor: color }} />
        ))}
      </aside>
      <aside className="flex w-5 shrink-0 flex-col items-center px-px">
        <div className="flex h-[43px] w-full shrink-0 flex-col items-center">
          <PaletteHeader dropper="dropperOff" />
        </div>
        <button aria-label="Scroll palette up" className="flex h-[17px] w-4 shrink-0 items-center justify-center rounded-xs border border-[#dad7c6] bg-[#f0eee2]">
          <Chevron dir="up" className="opacity-30" />
        </button>
        <NoColor className="h-[18px] w-full" />
        {DEFAULT_COLORS.map((color, i) => (
          <button
            key={color}
            aria-label={color}
            className={clsx("h-[17px] w-full shrink-0 border-x border-b border-[#5c5c5c]", i === 0 && "outline-2 -outline-offset-2 outline-white")}
            style={{ backgroundColor: color }}
          />
        ))}
        <div className="mt-0.5">
          <ScrollButton dir="down" />
        </div>
        <button aria-label="Expand palette" className="mt-1">
          <svg viewBox="0 0 10 10" className="size-2.5" aria-hidden="true">
            <path d="M1 0H2.500V10H1ZM8.500 0V10L3.500 5Z" />
          </svg>
        </button>
      </aside>
    </>
  )
}

function StatusBar() {
  return (
    <footer className="flex h-12 shrink-0 border-t border-white">
      <div className="flex min-w-0 flex-1 flex-col pl-1">
        <div className="flex h-[21px] items-center">
          <span className="w-[115px]">( 235,410; 135,059 )</span>
          <svg viewBox="0 0 6 10" className="h-2.5 w-1.5" aria-hidden="true">
            <path d="M0 0L6 5L0 10Z" />
          </svg>
          <span className="ml-[242px] flex-1">Ellipse on Layer 1</span>
          <Icon name="monitor" className="mr-[54px] size-4" />
        </div>
        <div className="flex h-[21px] items-center gap-1.5">
          Document color profiles: RGB: sRGB IEC61966-2.1; CMYK: ISO Coated v2 (ECI); Grayscale: Dot Gain 15%
          <svg viewBox="0 0 6 10" className="h-2.5 w-1.5" aria-hidden="true">
            <path d="M0 0L6 5L0 10Z" />
          </svg>
        </div>
      </div>
      <div className="mt-1 h-3.5 w-px bg-[#c5c2ad]" />
      <div className="flex w-[221px] flex-col pl-1">
        <div className="flex h-[22px] items-center">
          <Icon name="fill" />
          <NoColor className="ml-[5px] size-[18px]" />
          <span className="ml-[3px]">None</span>
        </div>
        <div className="flex h-[21px] items-center">
          <Icon name="pen" />
          <span className="ml-[5px] size-[18px] border border-[#777] bg-[#151716]" />
          <span className="ml-[3px] whitespace-pre">C:0 M:0 Y:0 K:100  0,200 mm</span>
        </div>
      </div>
      <div className="w-[25px] pt-2">
        <button aria-label="Account" className="relative flex size-[18px] justify-start">
          <Icon name="user" className="size-[15px]" />
          <Corner />
        </button>
      </div>
    </footer>
  )
}

const TASKS: [string, string][] = [
  ["folder", "Е..."],
  ["cmd", "Я..."],
  ["meter", "М..."],
  ["chrome", "[..."],
  ["notes", "[..."],
  ["folder", "С..."],
  ["photoshop", "А..."],
  ["corel", "С..."],
]

const TRAY = ["utorrent", "safelyRemove", "violetGreen", "flower", "sound", "adobe", "network", "speaker", "flash", "disc"]

function Taskbar() {
  return (
    <div className="flex h-[31px] shrink-0 items-center bg-linear-to-b from-[#1c4bb8] via-[#2a66e0] via-15% to-[#2258d6] text-white">
      <button className="flex h-full w-24 items-center rounded-r-xl bg-linear-to-b from-[#6cb86a] via-[#3b9440] via-20% to-[#2f8534] pl-2.5 shadow-[inset_-3px_-2px_4px_#1f5f24]">
        <Icon name="flag" className="size-[18px]" />
        <span className="ml-1.5 font-['Noto_Sans'] text-base font-bold italic [text-shadow:1px_1px_2px_#123]">пуск</span>
      </button>
      <div className="mr-[9px] ml-[9px] h-5 border-l-4 border-dotted border-[#1745b5]" />
      <div className="flex gap-[7px]">
        <Icon name="utorrent" />
        <Icon name="window" />
        <Icon name="chrome" />
        <Icon name="pilcrow" />
      </div>
      <button aria-label="More shortcuts" className="mb-3 ml-6 w-[15px] text-sm leading-4 text-[#b8d2ff]">
        »
      </button>
      <div className="mr-2 h-5 border-l-4 border-dotted border-[#1745b5]" />
      <div className="flex min-w-0 flex-1 gap-0.5">
        {TASKS.map(([icon, label], i) => (
          <button
            key={i}
            className={clsx(
              "flex h-[25px] w-[61px] items-center gap-1 rounded-[3px] pl-2 shadow-[inset_1px_1px_1px_#6ea2fa]",
              i === TASKS.length - 1 ? "bg-[#1e4cb8] shadow-none" : "bg-[#3c80f0]",
            )}
          >
            {icon === "photoshop" ? (
              <span className="flex size-4 items-center justify-center bg-[#1f3f78] text-[9px] font-bold text-[#d3e6ff]">Ps</span>
            ) : (
              <Icon name={icon} />
            )}
            {label}
          </button>
        ))}
      </div>
      <div className="flex h-full w-[254px] shrink-0 items-center justify-end gap-0.5 border-l border-[#0d3f9a] bg-linear-to-b from-[#17a4f0] via-[#1290e8] to-[#0f86e0] pr-3">
        {TRAY.map((name) => (
          <Icon key={name} name={name} />
        ))}
        <span className="ml-[5px]">16:57</span>
      </div>
    </div>
  )
}

export default function App() {
  return (
    <div className="flex h-screen flex-col overflow-hidden bg-[#ece9d8] [font-family:'DejaVu_Sans_Condensed','Noto_Sans',sans-serif] text-[11px] leading-4 text-black">
      <TitleBar />
      <MenuBar />
      <StandardToolbar />
      <PropertyBar />
      <div className="flex min-h-0 flex-1">
        <Toolbox />
        <Workspace />
        <TransformDocker />
        <Palettes />
      </div>
      <StatusBar />
      <Taskbar />
    </div>
  )
}
